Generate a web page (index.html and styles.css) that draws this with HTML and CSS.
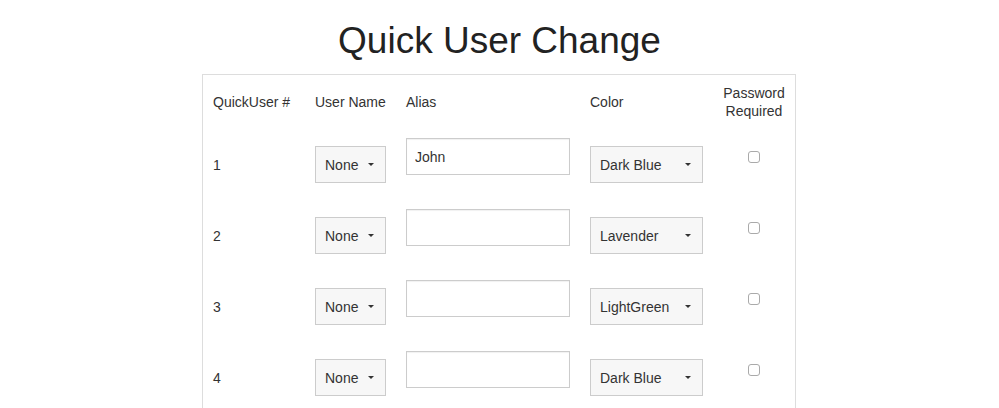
FILE: index.html
```html
<!DOCTYPE html>
<html lang="en">
<head>
    <meta charset="UTF-8">
    <title>Quick User Change</title>
    <link rel="stylesheet" href="styles.css">
</head>
<body>
    <h1>Quick User Change</h1>
    <div class="panel">
        <table id="quick-table">
            <thead>
                <tr>
                    <th class="col-num">QuickUser #</th>
                    <th class="col-user">User Name</th>
                    <th class="col-alias">Alias</th>
                    <th class="col-color">Color</th>
                    <th class="col-pass">Password<br>Required</th>
                </tr>
            </thead>
            <tbody>
                <tr>
                    <td>1</td>
                    <td><button class="dropdown small"><span>None</span><span class="caret"></span></button></td>
                    <td><input type="text" class="alias" value="John"></td>
                    <td><button class="dropdown wide"><span>Dark Blue</span><span class="caret"></span></button></td>
                    <td class="col-pass"><input type="checkbox" class="check"></td>
                </tr>
                <tr>
                    <td>2</td>
                    <td><button class="dropdown small"><span>None</span><span class="caret"></span></button></td>
                    <td><input type="text" class="alias"></td>
                    <td><button class="dropdown wide"><span>Lavender</span><span class="caret"></span></button></td>
                    <td class="col-pass"><input type="checkbox" class="check"></td>
                </tr>
                <tr>
                    <td>3</td>
                    <td><button class="dropdown small"><span>None</span><span class="caret"></span></button></td>
                    <td><input type="text" class="alias"></td>
                    <td><button class="dropdown wide"><span>LightGreen</span><span class="caret"></span></button></td>
                    <td class="col-pass"><input type="checkbox" class="check"></td>
                </tr>
                <tr>
                    <td>4</td>
                    <td><button class="dropdown small"><span>None</span><span class="caret"></span></button></td>
                    <td><input type="text" class="alias"></td>
                    <td><button class="dropdown wide"><span>Dark Blue</span><span class="caret"></span></button></td>
                    <td class="col-pass"><input type="checkbox" class="check"></td>
                </tr>
            </tbody>
        </table>
    </div>
</body>
</html>
```

FILE: styles.css
```css
body {
    margin: 0;
    font-family: "Liberation Sans", Arial, sans-serif;
    font-size: 14px;
    color: #333;
    background: #fff;
}
h1 {
    margin: 21px 0 13px;
    font-size: 37px;
    font-weight: normal;
    line-height: 40px;
    text-align: center;
    color: #222;
}
.panel {
    width: 592px;
    margin: 0 0 0 calc(50% - 297.5px);
    border: 1px solid #ddd;
    border-bottom: none;
}
table {
    border-collapse: collapse;
    table-layout: fixed;
    width: 592px;
}
th, td {
    padding: 0 10px;
    text-align: left;
    vertical-align: middle;
}
th {
    font-weight: normal;
    height: 54px;
    line-height: 18px;
}
td {
    height: 71px;
}
.col-num { width: 82px; }
.col-user { width: 71px; }
.col-alias { width: 164px; }
.col-color { width: 113px; }
.col-pass { text-align: center; }
.dropdown {
    display: flex;
    align-items: center;
    justify-content: space-between;
    box-sizing: border-box;
    height: 37px;
    padding: 0 11px 0 9px;
    background: #f7f7f7;
    border: 1px solid #ccc;
    border-radius: 0;
    font-family: inherit;
    font-size: 14px;
    color: #333;
}
.dropdown.small { width: 71px; }
.dropdown.wide { width: 113px; }
.caret {
    width: 0;
    height: 0;
    border-top: 3px solid #333;
    border-left: 3px solid transparent;
    border-right: 3px solid transparent;
}
.alias {
    display: block;
    box-sizing: border-box;
    width: 164px;
    height: 37px;
    margin: 0 0 16px;
    padding: 0 8px;
    border: 1px solid #ccc;
    border-radius: 0;
    box-shadow: inset 0 1px 1px rgba(0, 0, 0, 0.06);
    font-family: inherit;
    font-size: 14px;
    color: #333;
}
.check {
    appearance: none;
    display: block;
    width: 12px;
    height: 12px;
    margin: 0 auto 16px;
    border: 1px solid #aaa;
    border-radius: 3px;
    background: #fff;
}
```
